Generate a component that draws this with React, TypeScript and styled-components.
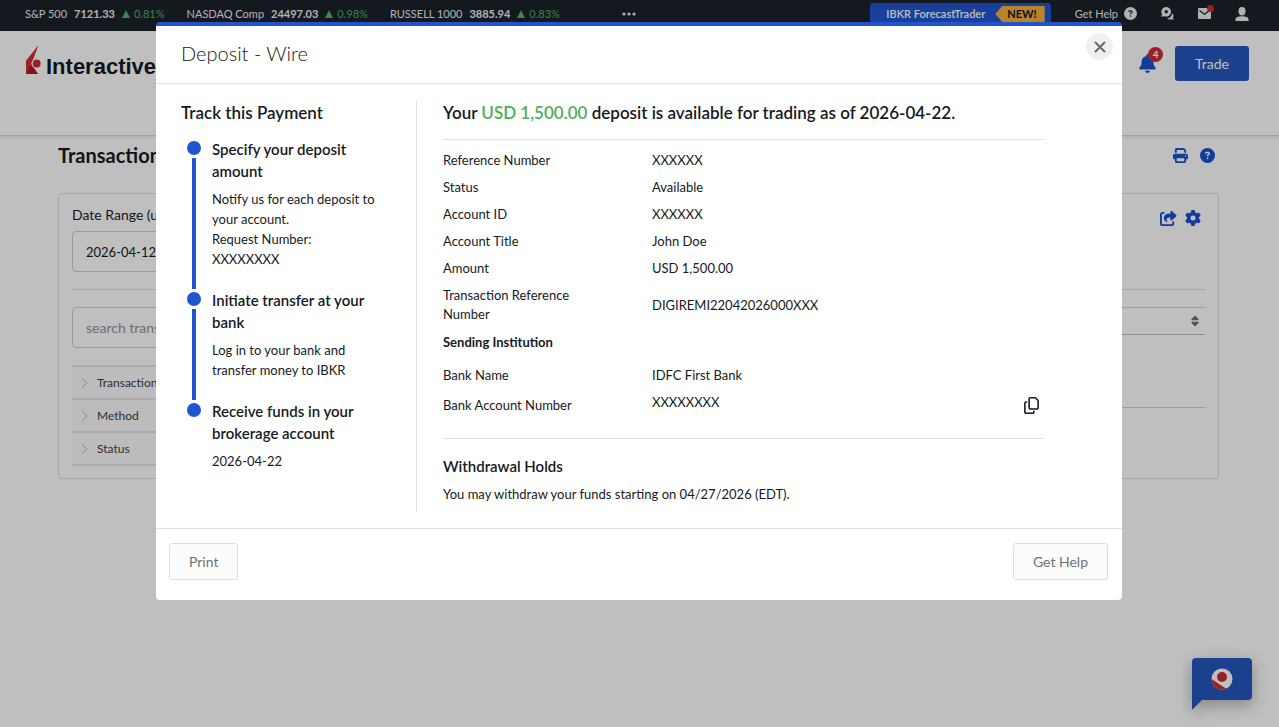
import React from "react";
import styled, { createGlobalStyle } from "styled-components";
import { FaBell, FaCircleQuestion, FaGear, FaPrint, FaRegCopy, FaShareFromSquare, FaSort } from "react-icons/fa6";

const color = {
  blue: "#2155d0",
  buttonBlue: "#2457be",
  linkBlue: "#1b50cc",
  ink: "#161a22",
  bar: "#1b202a",
  red: "#d02c31",
  green: "#4caf5c",
  line: "#dfe0e2",
  pageLine: "#dcdcde",
};

const GlobalStyle = createGlobalStyle`
  *, *::before, *::after { box-sizing: border-box; }
  body {
    margin: 0;
    background: #fff;
    color: ${color.ink};
    font-family: Lato, "Liberation Sans", sans-serif;
    font-size: 14px;
    line-height: 20px;
  }
  h1, h2, h3, p, dl, dd, dt, ol { margin: 0; padding: 0; }
  button, input { font: inherit; color: inherit; }
  button { cursor: pointer; }
`;

/* ---------- Page ---------- */

const Page = styled.div`
  min-height: 100vh;
  overflow: hidden;
`;

const TopBar = styled.div`
  display: flex;
  align-items: center;
  justify-content: space-between;
  height: 31px;
  padding: 0 30px 4px 25px;
  background: ${color.bar};
  color: #ececee;
  font-size: 11px;
  line-height: 16px;
  white-space: nowrap;
`;

const Quotes = styled.div`
  display: flex;
  align-items: center;
  gap: 22px;
`;

const Quote = styled.span`
  display: flex;
  align-items: center;
  gap: 7px;
`;

const Change = styled.span`
  display: flex;
  align-items: center;
  gap: 4px;
  color: #4db564;
`;

const MoreButton = styled.button`
  display: flex;
  margin-left: 40px;
  padding: 0;
  border: 0;
  background: none;
`;

const TopActions = styled.div`
  display: flex;
  align-items: center;
  gap: 24px;
`;

const Forecast = styled.a`
  display: flex;
  align-items: center;
  gap: 10px;
  height: 28px;
  margin-top: 7px;
  padding: 0 6px 6px 16px;
  border-radius: 3px 3px 0 0;
  background: ${color.blue};
  color: #fff;
  font-weight: 600;
  text-decoration: none;
`;

const NewTag = styled.span`
  padding: 0 8px 0 12px;
  background: #f5b13c;
  color: #10131a;
  font-weight: 700;
  clip-path: polygon(0 50%, 7px 0, 100% 0, 100% 100%, 7px 100%);
`;

const BarButton = styled.button`
  position: relative;
  display: flex;
  align-items: center;
  gap: 6px;
  padding: 0;
  border: 0;
  background: none;
`;

const MailDot = styled.span`
  position: absolute;
  top: -3px;
  right: -3px;
  width: 7px;
  height: 7px;
  border-radius: 50%;
  background: ${color.red};
`;

const Header = styled.header`
  display: flex;
  align-items: flex-start;
  justify-content: space-between;
  height: 105px;
  padding: 15px 30px 0 25px;
  border-bottom: 1px solid #d8d8da;
  box-shadow: 0 1px 3px rgba(0, 0, 0, 0.12);
`;

const Brand = styled.a`
  display: flex;
  align-items: flex-end;
  gap: 5px;
  color: ${color.ink};
  font: 700 22px/16px "Liberation Sans", sans-serif;
  text-decoration: none;
`;

const HeaderActions = styled.div`
  display: flex;
  align-items: center;
  gap: 16px;
`;

const IconButton = styled.button`
  position: relative;
  display: flex;
  padding: 0;
  border: 0;
  background: none;
  color: ${color.linkBlue};
`;

const Count = styled.span`
  position: absolute;
  top: -7px;
  right: -6px;
  width: 15px;
  height: 15px;
  border-radius: 50%;
  background: ${color.red};
  color: #fff;
  font-size: 10px;
  font-weight: 700;
  line-height: 15px;
  text-align: center;
`;

const TradeButton = styled.button`
  height: 35px;
  margin-left: 2px;
  padding: 0 20px;
  border: 0;
  border-radius: 3px;
  background: ${color.buttonBlue};
  color: #fff;
`;

const Content = styled.main`
  padding: 8px 60px 40px 58px;
`;

const TitleRow = styled.div`
  display: flex;
  align-items: center;
  justify-content: space-between;
  padding-right: 4px;
`;

const PageTitle = styled.h1`
  font-size: 20px;
  font-weight: 700;
  line-height: 22px;
`;

const IconRow = styled.div`
  display: flex;
  gap: 12px;
`;

const PanelTools = styled(IconRow)`
  gap: 8px;
  padding: 5px 4px;
`;

const Panel = styled.section`
  height: 286px;
  margin-top: 27px;
  padding: 11px 13px;
  border: 1px solid ${color.pageLine};
  border-radius: 4px;
`;

const PanelTop = styled.div`
  display: flex;
  align-items: flex-start;
  justify-content: space-between;
  padding-bottom: 17px;
  border-bottom: 1px solid ${color.pageLine};
`;

const Field = styled.label`
  display: flex;
  flex-direction: column;
  gap: 6px;
`;

const TextInput = styled.input`
  width: 100%;
  height: 41px;
  padding: 0 13px;
  border: 1px solid #d0d0d3;
  border-radius: 4px;
  background: transparent;
  font-size: 13px;
  &::placeholder { color: #8f9299; font-size: 14px; opacity: 1; }
`;

const PanelBody = styled.div`
  display: grid;
  grid-template-columns: 280px 1fr;
  gap: 24px;
  margin-top: 17px;
`;

const Filters = styled.div`
  margin-top: 17px;
  border-top: 2px solid #e4e4e6;
`;

const FilterButton = styled.button`
  display: flex;
  align-items: center;
  gap: 9px;
  width: 100%;
  height: 33px;
  padding: 0 9px;
  border: 0;
  border-bottom: 2px solid #e4e4e6;
  background: #fbfbfb;
  color: #3a3d45;
  font-size: 12px;
`;

const Results = styled.div`
  height: 101px;
  border-top: 1px solid #d0d0d3;
  border-bottom: 1px solid #d0d0d3;
`;

const ResultsHead = styled.div`
  display: flex;
  align-items: center;
  justify-content: flex-end;
  height: 27px;
  padding-right: 4px;
  border-bottom: 1px solid #c2c3c6;
  & button { color: #6b6f76; }
`;

const ChatButton = styled.button`
  position: fixed;
  right: 27px;
  bottom: 17px;
  padding: 0;
  border: 0;
  background: none;
  filter: drop-shadow(0 5px 8px rgba(0, 0, 0, 0.3));
  & svg { display: block; }
`;

/* ---------- Dialog ---------- */

const Backdrop = styled.div`
  position: fixed;
  inset: 0;
  z-index: 10;
  padding: 22px 23px 22px 22px;
  overflow: auto;
  background: rgba(0, 0, 0, 0.25);
`;

const Dialog = styled.div`
  max-width: 966px;
  margin: 0 auto;
  border-top: 4px solid ${color.blue};
  border-radius: 4px;
  background: #fff;
`;

const DialogHeader = styled.div`
  display: flex;
  align-items: flex-start;
  justify-content: space-between;
  padding: 7px 9px 15px 25px;
  border-bottom: 1px solid ${color.line};
`;

const DialogTitle = styled.h2`
  padding: 7px 0 2px;
  font-size: 20px;
  font-weight: 300;
  line-height: 26px;
`;

const CloseButton = styled.button`
  display: grid;
  place-items: center;
  width: 27px;
  height: 27px;
  padding: 0;
  border: 0;
  border-radius: 50%;
  background: #f0f0f0;
  color: #66696f;
`;

const DialogBody = styled.div`
  display: grid;
  grid-template-columns: 236px 1fr;
  padding: 17px 78px 16px 25px;
`;

const Track = styled.section`
  padding-right: 30px;
  border-right: 1px solid ${color.line};
`;

const Heading = styled.h3`
  font-size: 17px;
  font-weight: 600;
  line-height: 24px;
`;

const Amount = styled.span`
  color: ${color.green};
`;

const Steps = styled.ol`
  margin-top: 13px;
  list-style: none;
`;

const Step = styled.li`
  display: grid;
  grid-template-columns: 26px 1fr;
  gap: 5px;
`;

const Rail = styled.span`
  display: flex;
  flex-direction: column;
  align-items: center;
  padding-top: 3px;
`;

const Dot = styled.span`
  width: 14px;
  height: 14px;
  border-radius: 50%;
  background: ${color.blue};
`;

const Connector = styled.span`
  flex: 1;
  width: 4px;
  margin-top: 3px;
  background: ${color.blue};
`;

const StepText = styled.div`
  padding-bottom: 20px;
  font-size: 13px;
  white-space: pre-line;
`;

const StepTitle = styled.h3`
  margin-bottom: 7px;
  font-size: 15px;
  font-weight: 600;
  line-height: 22px;
`;

const Details = styled.section`
  padding-left: 26px;
  font-size: 13px;
`;

const DetailList = styled.dl`
  margin-top: 14px;
  padding-top: 7px;
  border-top: 1px solid ${color.line};
`;

const BankList = styled.dl`
  padding: 6px 0 16px;
  border-bottom: 1px solid ${color.line};
`;

const DetailRow = styled.div<{ $action?: boolean }>`
  display: grid;
  grid-template-columns: 149px 1fr auto;
  column-gap: 60px;
  align-items: center;
  min-height: ${(p) => (p.$action ? 33 : 27)}px;
  padding: 4px 4px 4px 0;
  line-height: 19px;
  & dd { align-self: ${(p) => (p.$action ? "start" : "center")}; }
`;

const SubHeading = styled.h3`
  padding: 5px 0 4px;
  font-size: 13px;
  font-weight: 700;
  line-height: 19px;
`;

const CopyButton = styled(IconButton)`
  color: ${color.ink};
`;

const Holds = styled.div`
  padding: 16px 0 8px;
`;

const DialogFooter = styled.div`
  display: flex;
  justify-content: space-between;
  padding: 14px 14px 20px 13px;
  border-top: 1px solid ${color.line};
`;

const PlainButton = styled.button`
  height: 37px;
  padding: 0 19px;
  border: 1px solid #dddee0;
  border-radius: 3px;
  background: #fcfcfc;
  color: #6f7175;
`;

/* ---------- Drawings ---------- */

const BrandMark = () => (
  <svg width="16" height="29" viewBox="0 0 16 29" aria-hidden="true">
    <path d="M13 0 1 15v13l5-9z" fill="#d02c31" />
    <path d="M13 0 6 18l7 10H1V15z" fill="#d02c31" />
    <path d="M1 28 6 18l7 10z" fill="#a81e25" />
    <circle cx="11.500" cy="17.500" r="5" fill="#fff" />
    <circle cx="11.700" cy="17.500" r="3.900" fill="#d02c31" />
  </svg>
);

const UpArrow = () => (
  <svg width="8" height="8" viewBox="0 0 8 8" aria-hidden="true">
    <path d="M4 0l4 8H0z" fill="currentColor" />
  </svg>
);

const ChatsIcon = () => (
  <svg width="13" height="13" viewBox="0 0 13 13" aria-hidden="true">
    <path d="M5.200 0a4.800 4.800 0 1 1-1.900 9.200L.3 9.800 1 7.200A4.800 4.800 0 0 1 5.200 0z" fill="currentColor" />
    <circle cx="5.200" cy="4.800" r="1.700" fill={color.bar} />
    <path d="M11.200 6.200c1.500 1.300 1.700 3 .8 4.400l.6 2.200-2.400-.6c-1.500.5-3.200.2-4-.8 2.800-.4 4.800-2.300 5-5.200z" fill="currentColor" />
  </svg>
);

const MailIcon = () => (
  <svg width="13" height="11" viewBox="0 0 13 11" aria-hidden="true">
    <rect width="13" height="11" rx="1" fill="currentColor" />
    <path d="M1.500 2.500 6.500 6.200l5-3.700" fill="none" stroke={color.bar} strokeWidth="1.200" />
  </svg>
);

const UserIcon = () => (
  <svg width="14" height="14" viewBox="0 0 14 14" aria-hidden="true">
    <ellipse cx="7" cy="4.200" rx="3.500" ry="4.200" fill="currentColor" />
    <path d="M.5 14v-1.500C.5 10 3 9.200 7 9.200s6.500.8 6.500 3.300V14z" fill="currentColor" />
  </svg>
);

const ChatBubble = () => (
  <svg width="60" height="52" viewBox="0 0 60 52" aria-hidden="true">
    <path d="M4 0h52a4 4 0 0 1 4 4v34a4 4 0 0 1-4 4H10L0 52V4a4 4 0 0 1 4-4z" fill={color.buttonBlue} />
    <clipPath id="badge"><circle cx="30" cy="21" r="10.500" /></clipPath>
    <g clipPath="url(#badge)">
      <rect x="19" y="10" width="22" height="22" fill="#fff" />
      <path d="M19 20.500 36 32H19z" fill="#d02c31" />
    </g>
    <circle cx="30" cy="19" r="5" fill="#c92830" />
  </svg>
);

/* ---------- Data ---------- */

const quotes = [
  { name: "S&P 500", value: "7121.33", change: "0.81%" },
  { name: "NASDAQ Comp", value: "24497.03", change: "0.98%" },
  { name: "RUSSELL 1000", value: "3885.94", change: "0.83%" },
];

const steps = [
  { title: "Specify your deposit amount", text: "Notify us for each deposit to your account.\nRequest Number:\nXXXXXXXX" },
  { title: "Initiate transfer at your bank", text: "Log in to your bank and transfer money to IBKR" },
  { title: "Receive funds in your brokerage account", text: "2026-04-22" },
];

const details = [
  ["Reference Number", "XXXXXX"],
  ["Status", "Available"],
  ["Account ID", "XXXXXX"],
  ["Account Title", "John Doe"],
  ["Amount", "USD 1,500.00"],
  ["Transaction Reference Number", "DIGIREMI22042026000XXX"],
];

export default function App() {
  return (
    <>
      <GlobalStyle />
      <Page>
        <TopBar>
          <Quotes>
            {quotes.map((q) => (
              <Quote key={q.name}>
                <span>{q.name}</span>
                <strong>{q.value}</strong>
                <Change><UpArrow />{q.change}</Change>
              </Quote>
            ))}
            <MoreButton aria-label="More quotes">
              <svg width="14" height="4" viewBox="0 0 14 4">
                {[2, 7, 12].map((x) => <circle key={x} cx={x} cy="2" r="1.6" fill="currentColor" />)}
              </svg>
            </MoreButton>
          </Quotes>
          <TopActions>
            <Forecast href="#forecast">IBKR ForecastTrader<NewTag>NEW!</NewTag></Forecast>
            <BarButton>Get Help<FaCircleQuestion size={13} /></BarButton>
            <BarButton aria-label="Chat"><ChatsIcon /></BarButton>
            <BarButton aria-label="Messages"><MailIcon /><MailDot /></BarButton>
            <BarButton aria-label="Account"><UserIcon /></BarButton>
          </TopActions>
        </TopBar>

        <Header>
          <Brand href="#home"><BrandMark />Interactive</Brand>
          <HeaderActions>
            <IconButton aria-label="Search">
              <svg width="18" height="18" viewBox="0 0 18 18"><circle cx="9" cy="9" r="7" fill="none" stroke="currentColor" strokeWidth="1" /></svg>
            </IconButton>
            <IconButton aria-label="Notifications"><FaBell size={19} /><Count>4</Count></IconButton>
            <TradeButton>Trade</TradeButton>
          </HeaderActions>
        </Header>

        <Content>
          <TitleRow>
            <PageTitle>Transactions</PageTitle>
            <IconRow>
              <IconButton aria-label="Print page"><FaPrint size={15} /></IconButton>
              <IconButton aria-label="Page help"><FaCircleQuestion size={15} /></IconButton>
            </IconRow>
          </TitleRow>
          <Panel>
            <PanelTop>
              <Field>
                <span>Date Range (utc)</span>
                <TextInput defaultValue="2026-04-12" />
              </Field>
              <PanelTools>
                <IconButton aria-label="Export"><FaShareFromSquare size={17} /></IconButton>
                <IconButton aria-label="Settings"><FaGear size={16} /></IconButton>
              </PanelTools>
            </PanelTop>
            <PanelBody>
              <div>
                <TextInput placeholder="search transactions" aria-label="Search transactions" />
                <Filters>
                  {["Transaction Type", "Method", "Status"].map((f) => (
                    <FilterButton key={f}>
                      <svg width="7" height="12" viewBox="0 0 7 12"><path d="M1 1l5 5-5 5" fill="none" stroke="#b8babf" strokeWidth="1" /></svg>
                      {f}
                    </FilterButton>
                  ))}
                </Filters>
              </div>
              <Results>
                <ResultsHead><IconButton aria-label="Sort"><FaSort size={12} /></IconButton></ResultsHead>
              </Results>
            </PanelBody>
          </Panel>
        </Content>
        <ChatButton aria-label="Open chat"><ChatBubble /></ChatButton>
      </Page>

      <Backdrop>
        <Dialog role="dialog" aria-modal="true" aria-labelledby="dialog-title">
          <DialogHeader>
            <DialogTitle id="dialog-title">Deposit - Wire</DialogTitle>
            <CloseButton aria-label="Close">
              <svg width="12" height="12" viewBox="0 0 12 12"><path d="M1 1l10 10M11 1L1 11" stroke="currentColor" strokeWidth="2" /></svg>
            </CloseButton>
          </DialogHeader>
          <DialogBody>
            <Track>
              <Heading>Track this Payment</Heading>
              <Steps>
                {steps.map((s, i) => (
                  <Step key={s.title}>
                    <Rail><Dot />{i < steps.length - 1 && <Connector />}</Rail>
                    <StepText><StepTitle>{s.title}</StepTitle><p>{s.text}</p></StepText>
                  </Step>
                ))}
              </Steps>
            </Track>
            <Details>
              <Heading>
                Your <Amount>USD 1,500.00</Amount> deposit is available for trading as of 2026-04-22.
              </Heading>
              <DetailList>
                {details.map(([k, v]) => (
                  <DetailRow key={k}><dt>{k}</dt><dd>{v}</dd></DetailRow>
                ))}
              </DetailList>
              <SubHeading>Sending Institution</SubHeading>
              <BankList>
                <DetailRow><dt>Bank Name</dt><dd>IDFC First Bank</dd></DetailRow>
                <DetailRow $action>
                  <dt>Bank Account Number</dt>
                  <dd>XXXXXXXX</dd>
                  <CopyButton aria-label="Copy account number"><FaRegCopy size={17} /></CopyButton>
                </DetailRow>
              </BankList>
              <Holds>
                <StepTitle>Withdrawal Holds</StepTitle>
                <p>You may withdraw your funds starting on 04/27/2026 (EDT).</p>
              </Holds>
            </Details>
          </DialogBody>
          <DialogFooter>
            <PlainButton>Print</PlainButton>
            <PlainButton>Get Help</PlainButton>
          </DialogFooter>
        </Dialog>
      </Backdrop>
    </>
  );
}
